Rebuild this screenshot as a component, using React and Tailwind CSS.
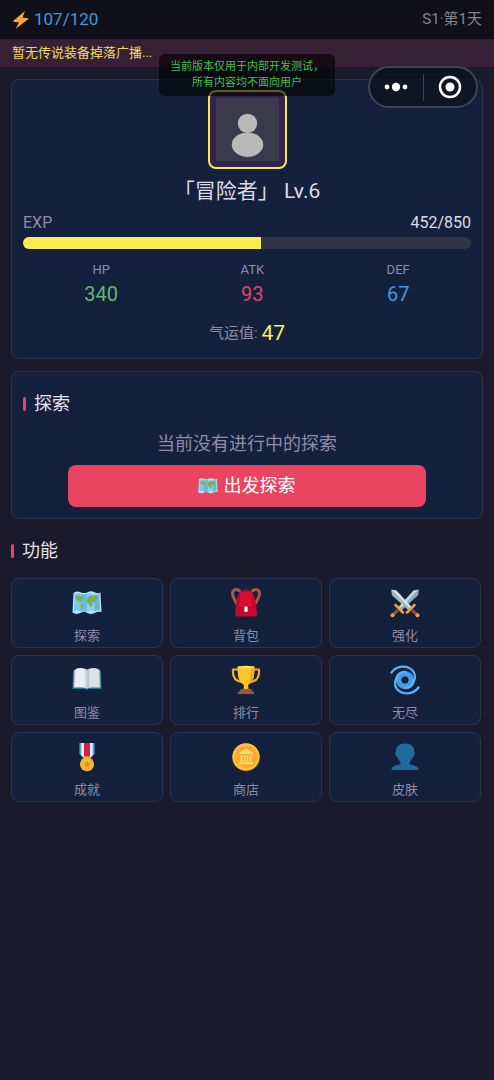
import { useState } from 'react';

const MapIcon = ({ className }) => (
    <svg viewBox="0 0 30 30" className={className} aria-hidden="true">
        <path d="M1.500 5 Q5 2.500 8.500 4.200 T15.500 4.200 T22.500 4.200 T28.500 4.500 L29.500 24 Q26 23 22.500 25 T15.500 25 T8 25 T0.500 24.500 Z" fill="#b9e3f7" />
        <path d="M2.500 6.500 Q6 4.500 9 6 L8 23 Q5 22 2 23 Z" fill="#7cc5f2" />
        <path d="M9 6 Q12.500 7 15.500 5.500 V23.500 Q12 24.500 8 23 Z" fill="#66b8ee" />
        <path d="M15.500 5.500 Q19 4.500 21.500 6 L22.500 23.500 Q19 22 15.500 23.500 Z" fill="#8bd0f5" />
        <path d="M21.500 6 Q24.500 7 27.300 6 L28 22.500 Q25 22 22.500 23.500 Z" fill="#66b8ee" />
        <path d="M3.500 8.500 L7 7.500 L11 9 L12 10.500 L10 12 L9 14 L7 13.500 L5 12 L3.500 10.500 Z" fill="#7cb342" />
        <path d="M8.500 15.500 L11.500 16.500 L12.500 18 L10.800 19.500 L9.800 22 L8.500 19.500 Z" fill="#8bbd3c" />
        <path d="M16 9 L18.500 7.500 L25 8.500 L26 10 L24 12.500 L23.500 14.500 L21.800 13.500 L20.500 15 L20 18 L18.200 19.500 L17.200 16 L14.800 14.500 L14.500 12 Z" fill="#7cb342" />
        <path d="M23.500 18.500 L26 17.500 L26.500 20 L24.500 20.500 Z" fill="#8bbd3c" />
    </svg>
);

const BackpackIcon = ({ className }) => (
    <svg viewBox="0 0 30 30" className={className} aria-hidden="true">
        <path d="M9.500 3.500 C5 -0.500 0 2 2 8 C3 12 5 12.500 5.500 16" fill="none" stroke="#a45a44" strokeWidth="3" />
        <path d="M20.500 3.500 C25 -0.500 30 2 28 8 C27 12 25 12.500 24.500 16" fill="none" stroke="#a45a44" strokeWidth="3" />
        <path d="M8 5 Q9 3 11 3 H19 Q21 3 22 5 L24.500 12 L26 26 Q26 28.500 23.500 28.500 H6.500 Q4 28.500 4 26 L5.500 12 Z" fill="#c4092f" />
        <path d="M12 3 Q15 0 18 3" fill="none" stroke="#8c1230" strokeWidth="1.600" />
        <path d="M9 4 H21 L22.500 17 Q22.500 19.500 20 19.500 H10 Q7.500 19.500 7.500 17 Z" fill="#d90d36" />
        <path d="M9 5 L7.500 17 Q7.500 19.500 10 19.500 H20 Q22.500 19.500 22.500 17 L21 5" fill="none" stroke="#9d0c2b" strokeWidth="0.900" />
        <rect x="13.400" y="18.500" width="3.200" height="5.500" rx="0.800" fill="#fff" />
    </svg>
);

const SwordsIcon = ({ className }) => (
    <svg viewBox="0 0 30 30" className={className} aria-hidden="true">
        <path d="M28.500 1.500 L28 7 L11 22.500 L8 19.500 L23.500 2.500 Z" fill="#c7d6df" />
        <path d="M28.500 1.500 L28 7 L11 22.500 L9.500 21 Z" fill="#91a9b7" />
        <path d="M1.500 1.500 L2 7 L19 22.500 L22 19.500 L6.500 2.500 Z" fill="#d5e2e9" />
        <path d="M1.500 1.500 L2 7 L19 22.500 L20.500 21 Z" fill="#9fb5c2" />
        <path d="M8 22 L2.800 27" stroke="#985137" strokeWidth="3" />
        <path d="M22 22 L27.200 27" stroke="#985137" strokeWidth="3" />
        <path d="M5.500 17 L13 24.500" stroke="#eda23c" strokeWidth="2.500" strokeLinecap="round" />
        <path d="M24.500 17 L17 24.500" stroke="#eda23c" strokeWidth="2.500" strokeLinecap="round" />
        <circle cx="2.500" cy="27.300" r="2" fill="#eda23c" />
        <circle cx="27.500" cy="27.300" r="2" fill="#eda23c" />
    </svg>
);

const BookIcon = ({ className }) => (
    <svg viewBox="0 0 30 30" className={className} aria-hidden="true">
        <path d="M1 6 H29 L29.500 24 H17 Q15 26 13 24 H0.500 Z" fill="#2d6f94" />
        <path d="M2 5 H28 L28.500 22.800 H1.500 Z" fill="#a6bdc9" />
        <path d="M3.500 4 Q10 1.500 15 5 V23.500 Q9.500 20.500 2.500 22.300 Z" fill="#eceff1" />
        <path d="M26.500 4 Q20 1.500 15 5 V23.500 Q20.500 20.500 27.500 22.300 Z" fill="#dce3e7" />
        <path d="M12.500 3.600 Q14 4 15 5 V23.500 L13 22.300 Z" fill="#cdd7dc" />
        <path d="M15 5 Q16 4 17.500 3.600 L17 22.300 L15 23.500 Z" fill="#b9c7cf" />
    </svg>
);

const TrophyIcon = ({ className }) => (
    <svg viewBox="0 0 30 30" className={className} aria-hidden="true">
        <path d="M8 4.500 H2 Q1 16 11 17 M22 4.500 H28 Q29 16 19 17" fill="none" stroke="#f3ad24" strokeWidth="2.200" strokeLinejoin="round" />
        <path d="M6.500 1.500 H23.500 C23.500 12 22.500 17 17 20 L17.500 25 H12.500 L13 20 C7.500 17 6.500 12 6.500 1.500 Z" fill="#fdc62e" />
        <path d="M20 2 H23.500 C23.500 12 22.500 17 17 20 L17.500 25 H15.500 C17.500 18 20 13 20 2 Z" fill="#f1ac24" />
        <ellipse cx="15" cy="2" rx="8.500" ry="1.200" fill="#ffdf63" />
        <path d="M9.500 24 H20.500 L21 26.500 H23 V29 H7 V26.500 H9 Z" fill="#9c563f" />
    </svg>
);

const SpiralIcon = ({ className }) => (
    <svg viewBox="0 0 30 30" className={className} aria-hidden="true">
        <circle cx="15" cy="15" r="6.300" fill="none" stroke="#429de8" strokeWidth="5.500" />
        <g fill="none" stroke="#5cb1f4" strokeLinecap="round">
            <path d="M1.500 7.500 C7 0 18 0 23 6 C25 8.500 25.500 12 24 16" strokeWidth="2.300" />
            <path d="M28.500 22.500 C23 30 12 30 7 24 C5 21.500 4.500 18 6 14" strokeWidth="2.300" />
            <path d="M6.500 15 C6.500 9.500 11 6.500 15.500 7" strokeWidth="2.600" />
            <path d="M23.500 15 C23.500 20.500 19 23.500 14.500 23" strokeWidth="2.600" />
        </g>
    </svg>
);

const MedalIcon = ({ className }) => (
    <svg viewBox="0 0 30 30" className={className} aria-hidden="true">
        <path d="M7.500 1 H22.500 V12 L18 17 H12 L7.500 12 Z" fill="#5da9dd" />
        <path d="M9.500 1 H20.500 V13 L17.500 16.500 H12.500 L9.500 13 Z" fill="#edf3f7" />
        <path d="M12 1 H18 V16 H12 Z" fill="#d91e42" />
        <rect x="11.500" y="14" width="7" height="3" rx="1.500" fill="#d48b29" />
        <circle cx="15" cy="22.300" r="7" fill="#fbbd3a" />
        <circle cx="15" cy="22.300" r="5.500" fill="none" stroke="#f19b27" strokeWidth="0.800" />
        <path d="M15 18.500 L16.200 21 L18.900 21.300 L16.900 23.200 L17.400 25.800 L15 24.500 L12.600 25.800 L13.100 23.200 L11.100 21.300 L13.800 21 Z" fill="#e98a1d" />
    </svg>
);

const CoinIcon = ({ className }) => (
    <svg viewBox="0 0 30 30" className={className} aria-hidden="true">
        <circle cx="15" cy="15.300" r="13.700" fill="#e18e1e" />
        <circle cx="15" cy="14.700" r="13.500" fill="#fdc33c" />
        <circle cx="15" cy="14.900" r="11.200" fill="#f9a82c" />
        <path d="M15 6.500 L22 10.500 V12 H8 V10.500 Z M9.500 13 H11.500 V19 H9.500 Z M13 13 H14.500 V19 H13 Z M15.800 13 H17.300 V19 H15.800 Z M18.700 13 H20.500 V19 H18.700 Z M8.500 19.500 H21.500 V20.700 H8.500 Z M7.500 21.200 H22.500 V22.300 H7.500 Z" fill="#fedc75" />
    </svg>
);

const BustIcon = ({ className }) => (
    <svg viewBox="0 0 30 30" className={className} aria-hidden="true">
        <path d="M15 1.500 C21.500 1.500 24.500 5 24 10 C25.500 10.500 25 13.500 23.500 14 C22.500 17 21 18.500 19.500 20 V22 C23 23.500 28.500 23.500 28.500 28 H1.500 C1.500 23.500 7 23.500 10.500 22 V20 C9 18.500 7.500 17 6.500 14 C5 13.500 4.500 10.500 6 10 C5.500 5 8.500 1.500 15 1.500 Z" fill="#236a9c" />
    </svg>
);

const features = [
    { label: '探索', icon: MapIcon },
    { label: '背包', icon: BackpackIcon },
    { label: '强化', icon: SwordsIcon },
    { label: '图鉴', icon: BookIcon },
    { label: '排行', icon: TrophyIcon },
    { label: '无尽', icon: SpiralIcon },
    { label: '成就', icon: MedalIcon },
    { label: '商店', icon: CoinIcon },
    { label: '皮肤', icon: BustIcon }
];

const stats = [
    { name: 'HP', value: 340, color: 'text-[#62b76a]' },
    { name: 'ATK', value: 93, color: 'text-[#e0446a]' },
    { name: 'DEF', value: 67, color: 'text-[#4598e6]' }
];

const SectionTitle = ({ children }) => (
    <h2 className="flex items-center gap-2 text-lg leading-6 text-[#e4e4ea]">
        <span className="h-[14px] w-[3px] rounded-sm bg-[#e94560]" />
        {children}
    </h2>
);

const App = () => {
    const [player] = useState({ energy: 107, maxEnergy: 120, level: 6, exp: 452, maxExp: 850, luck: 47 });
    const expPercent = (player.exp / player.maxExp) * 100;

    return (
        <div className="relative min-h-screen bg-[#1a1a2c] font-['Roboto','Noto_Sans_CJK_SC',sans-serif]">
            {/* Status bar */}
            <header className="flex h-[39px] items-center justify-between bg-[#10101b] px-3">
                <div className="flex items-center gap-1 text-[17px] text-[#4598dd]">
                    <svg viewBox="0 0 18 20" className="h-5 w-[18px]" aria-hidden="true">
                        <path d="M13 1 L0.500 11.500 L7 12.500 L3.500 19 L17 8.500 L10.500 7.500 Z" fill="#fba62f" />
                    </svg>
                    <span>{player.energy}/{player.maxEnergy}</span>
                </div>
                <span className="text-[15px] text-[#85858f]">S1·第1天</span>
            </header>

            {/* Broadcast */}
            <div className="flex h-7 items-center bg-[#352035] px-3 text-[13px] text-[#eedb5e]">
                暂无传说装备掉落广播...
            </div>

            <main className="px-[11px] pt-3">
                {/* Player card */}
                <section className="rounded-lg border border-[#2b3350] bg-[#14213d] px-[11px] py-[10px]">
                    <div className="mx-auto size-[79px] rounded-lg border-2 border-[#f6e74f] bg-[#34234a] p-[6px]">
                        <svg viewBox="0 0 62 62" className="size-full bg-[#3a3a4d]" aria-hidden="true">
                            <ellipse cx="31" cy="46" rx="15.500" ry="12" fill="#b9b9b9" />
                            <circle cx="31" cy="25" r="9.500" fill="#b9b9b9" />
                        </svg>
                    </div>
                    <h1 className="mt-2 text-center text-[21px] leading-7 text-[#dcdce4]">「冒险者」 Lv.{player.level}</h1>

                    <div className="mt-2 flex items-center justify-between text-base leading-5">
                        <span className="text-[#8d8da6]">EXP</span>
                        <span className="text-[#dcdce4]">{player.exp}/{player.maxExp}</span>
                    </div>
                    <div className="mt-1 h-3 overflow-hidden rounded-full bg-[#2f3545]">
                        <div className="h-full bg-[#feea50]" style={{ width: `${expPercent}%` }} />
                    </div>

                    <div className="mt-3 flex justify-around text-center">
                        {stats.map((stat) => (
                            <div key={stat.name}>
                                <p className="text-[13px] leading-[18px] text-[#8d8da6]">{stat.name}</p>
                                <p className={`text-xl leading-[30px] ${stat.color}`}>{stat.value}</p>
                            </div>
                        ))}
                    </div>

                    <p className="mt-[9px] flex items-center justify-center gap-1 text-[15px] leading-[30px] text-[#8d8da6]">
                        气运值: <span className="text-[21px] text-[#fbf05a]">{player.luck}</span>
                    </p>
                </section>

                {/* Exploration */}
                <section className="mt-3 rounded-lg border border-[#2b3350] bg-[#14213d] px-[11px] pt-5 pb-[11px]">
                    <SectionTitle>探索</SectionTitle>
                    <p className="mt-[14px] text-center text-lg leading-7 text-[#8d8da6]">当前没有进行中的探索</p>
                    <button className="mx-auto mt-[7px] flex h-[42px] w-4/5 items-center justify-center gap-[5px] rounded-lg bg-[#e94560] text-lg text-white">
                        <MapIcon className="h-5 w-5" />
                        出发探索
                    </button>
                </section>

                {/* Features */}
                <section className="mt-5">
                    <SectionTitle>功能</SectionTitle>
                    <div className="mt-[15px] mr-[2px] grid grid-cols-3 gap-[7px]">
                        {features.map((item) => (
                            <button key={item.label} className="flex h-[70px] flex-col items-center rounded-lg border border-[#2b3350] bg-[#14213d] pt-[9px]">
                                <item.icon className="size-[30px]" />
                                <span className="mt-[10px] text-[13px] leading-4 text-[#8d8da6]">{item.label}</span>
                            </button>
                        ))}
                    </div>
                </section>
            </main>

            {/* Dev build notice */}
            <div className="absolute top-[54px] left-1/2 -translate-x-1/2 rounded-md bg-black/60 px-[11px] py-[5px] text-center text-[11px] leading-4 whitespace-nowrap text-[#45bd50]">
                当前版本仅用于内部开发测试，
                <br />
                所有内容均不面向用户
            </div>

            {/* Mini program capsule */}
            <div className="absolute top-[66px] right-4 flex h-[42px] w-[110px] items-center rounded-full border-2 border-[#3d4453] bg-[#0d1321]/85">
                <button aria-label="更多" className="flex flex-1 items-center justify-center">
                    <svg viewBox="0 0 24 10" className="h-[10px] w-6" fill="#fff" aria-hidden="true">
                        <circle cx="3" cy="5" r="2.400" />
                        <circle cx="12" cy="5" r="4.200" />
                        <circle cx="21" cy="5" r="2.400" />
                    </svg>
                </button>
                <span className="h-[27px] w-px bg-[#3d4453]" />
                <button aria-label="关闭" className="flex flex-1 items-center justify-center">
                    <svg viewBox="0 0 24 24" className="size-6" aria-hidden="true">
                        <circle cx="12" cy="12" r="10" fill="none" stroke="#fff" strokeWidth="2.500" />
                        <circle cx="12" cy="12" r="4.500" fill="#fff" />
                    </svg>
                </button>
            </div>
        </div>
    );
};

export default App;
